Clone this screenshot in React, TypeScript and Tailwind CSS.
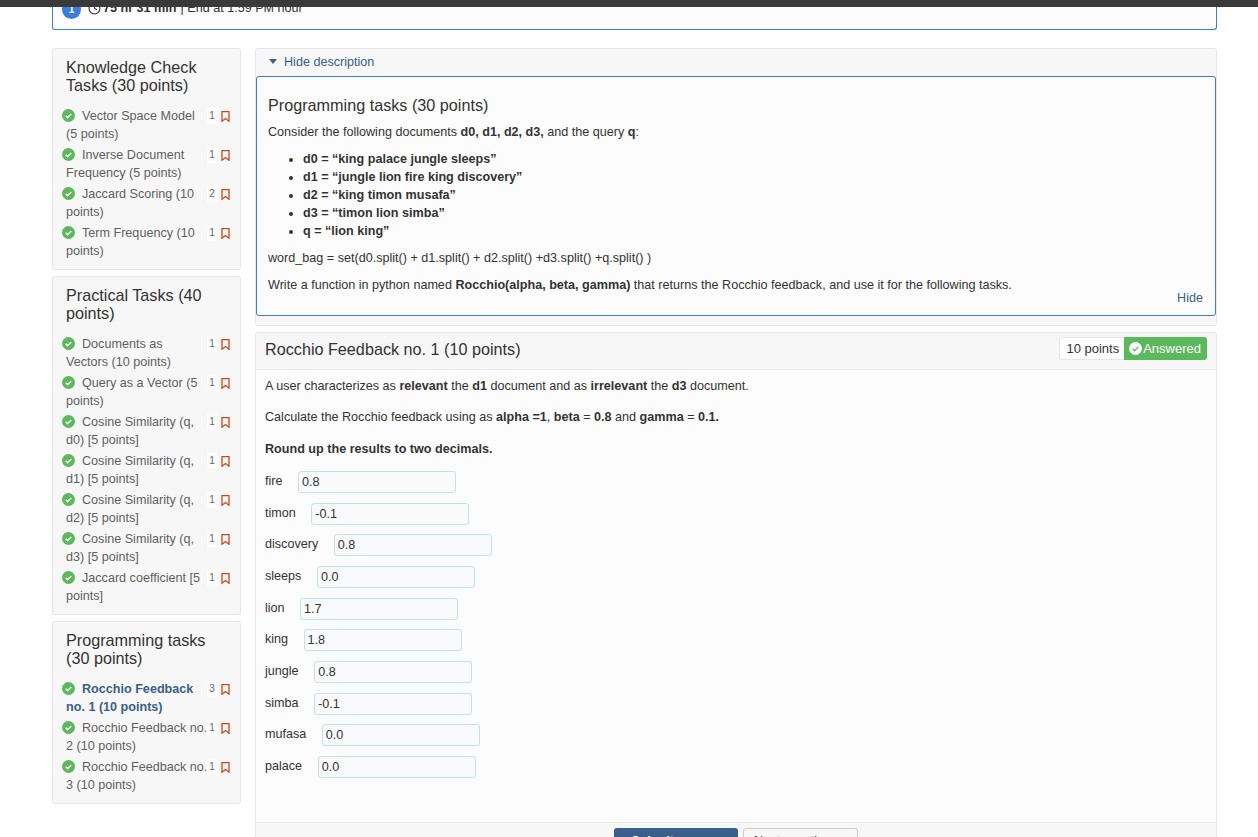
import { Clock, ChevronRight } from 'lucide-react';

type Task = { label: string; count: number; active?: boolean };

const sections: { title: string; tasks: Task[] }[] = [
  {
    title: 'Knowledge Check Tasks (30 points)',
    tasks: [
      { label: 'Vector Space Model (5 points)', count: 1 },
      { label: 'Inverse Document Frequency (5 points)', count: 1 },
      { label: 'Jaccard Scoring (10 points)', count: 2 },
      { label: 'Term Frequency (10 points)', count: 1 },
    ],
  },
  {
    title: 'Practical Tasks (40 points)',
    tasks: [
      { label: 'Documents as\nVectors (10 points)', count: 1 },
      { label: 'Query as a Vector (5 points)', count: 1 },
      { label: 'Cosine Similarity (q, d0) [5 points]', count: 1 },
      { label: 'Cosine Similarity (q, d1) [5 points]', count: 1 },
      { label: 'Cosine Similarity (q, d2) [5 points]', count: 1 },
      { label: 'Cosine Similarity (q, d3) [5 points]', count: 1 },
      { label: 'Jaccard coefficient [5 points]', count: 1 },
    ],
  },
  {
    title: 'Programming tasks (30 points)',
    tasks: [
      { label: 'Rocchio Feedback no. 1 (10 points)', count: 3, active: true },
      { label: 'Rocchio Feedback no. 2 (10 points)', count: 1 },
      { label: 'Rocchio Feedback no. 3 (10 points)', count: 1 },
    ],
  },
];

const docs = [
  'd0 = “king palace jungle sleeps”',
  'd1 = “jungle lion fire king discovery”',
  'd2 = “king timon musafa”',
  'd3 = “timon lion simba”',
  'q = “lion king”',
];

const answers = [
  ['fire', '0.8'],
  ['timon', '-0.1'],
  ['discovery', '0.8'],
  ['sleeps', '0.0'],
  ['lion', '1.7'],
  ['king', '1.8'],
  ['jungle', '0.8'],
  ['simba', '-0.1'],
  ['mufasa', '0.0'],
  ['palace', '0.0'],
];

function CheckDot({ className }: { className: string }) {
  return (
    <svg viewBox="0 0 14 14" className={className}>
      <circle cx="7" cy="7" r="7" fill="#5cb85c" />
      <path d="M4 7.3l2 2 4-4" fill="none" stroke="#fff" strokeWidth="1.6" />
    </svg>
  );
}

function TaskRow({ task }: { task: Task }) {
  return (
    <li className="relative pr-[31px] pb-[3px] pl-[13px] whitespace-pre-line">
      <CheckDot className="absolute top-[2px] left-[9px] h-[13px] w-[13px]" />
      <span className={task.active ? 'font-bold text-[#3a5f8a]' : 'text-[#5f5f5f]'}>
        <span className="inline-block w-[16px]" />
        {task.label}
      </span>
      <span className="absolute top-[1px] right-[23px] w-[10px] bg-[#fcfcfc] text-center text-[10px] leading-[16px] text-[#666]">
        {task.count}
      </span>
      <svg viewBox="0 0 9 11" className="absolute top-[4px] right-[10px] h-[11px] w-[9px]">
        <path d="M1 .7h7v9.5L4.5 7.6 1 10.2z" fill="none" stroke="#c9491c" strokeWidth="1.3" />
      </svg>
    </li>
  );
}

export default function App() {
  return (
    <div className="h-[837px] overflow-hidden bg-white font-['Liberation_Sans',Arial,sans-serif] text-[12.6px] leading-[18px] text-[#333]">
      <div className="h-[7px] bg-[#3a3a3a]" />

      <div className="pr-[41px] pl-[52px]">
        <div className="flex h-[23px] items-start gap-[7px] overflow-hidden rounded-b-[3px] border-x border-b border-[#3b7ddd] bg-[#fcfcfc] pl-[9px]">
          <span className="mt-[-7px] flex h-[19px] w-[19px] shrink-0 items-center justify-center rounded-full bg-[#3b7ddd] text-[10px] font-bold text-white">
            1
          </span>
          <span className="mt-[-7px] flex items-center gap-[2px] leading-[16px]">
            <Clock className="h-[13px] w-[13px]" />
            <b className="font-bold">75 hr 31 min</b>
            <span className="ml-[2px]">| End at 1:59 PM hour</span>
          </span>
        </div>

        <div className="mt-[18px] flex items-start gap-[14px]">
          <aside className="flex w-[189px] shrink-0 flex-col gap-[6px]">
            {sections.map((s) => (
              <section key={s.title} className="rounded-[3px] border border-[#e6e6e6] bg-[#f7f7f7] pt-[9px] pb-[6px]">
                <h3 className="px-[13px] pb-[13px] text-[16.2px] leading-[18px] font-normal text-[#333]">{s.title}</h3>
                <ul>
                  {s.tasks.map((t) => (
                    <TaskRow key={t.label} task={t} />
                  ))}
                </ul>
              </section>
            ))}
          </aside>

          <main className="min-w-0 flex-1">
            <div className="rounded-[3px] border border-[#e6e6e6] bg-[#f7f7f7] pb-[9px]">
              <div className="flex h-[27px] items-center gap-[7px] pb-[2px] pl-[13px] text-[#3a5f8a]">
                <span className="h-0 w-0 border-x-[4.5px] border-t-[5px] border-x-transparent border-t-[#3a5f8a]" />
                Hide description
              </div>
              <div className="rounded-[3px] border border-[#3b7ddd] bg-[#fcfcfc] px-[11px] pt-[19px] pb-[8px]">
                <h3 className="text-[16.2px] leading-[18px] font-normal">Programming tasks (30 points)</h3>
                <p className="mt-[9px]">
                  Consider the following documents <b>d0, d1, d2, d3,</b> and the query <b>q</b>:
                </p>
                <ul className="mt-[9px] list-disc pl-[35px] font-bold">
                  {docs.map((d) => (
                    <li key={d}>{d}</li>
                  ))}
                </ul>
                <p className="mt-[9px]">word_bag = set(d0.split() + d1.split() + d2.split() +d3.split() +q.split() )</p>
                <p className="mt-[9px]">
                  Write a function in python named <b>Rocchio(alpha, beta, gamma)</b> that returns the Rocchio feedback, and use it for the following tasks.
                </p>
                <div className="mt-[-5px] pr-[1px] text-right text-[#3a5f8a]">Hide</div>
              </div>
            </div>

            <div className="mt-[6px] rounded-t-[3px] border border-[#e6e6e6] bg-[#fcfcfc]">
              <div className="flex h-[37px] items-start justify-between border-b border-[#e6e6e6] bg-[#f7f7f7] px-[9px] pt-[4px]">
                <h3 className="pt-[3px] text-[16.2px] font-normal">Rocchio Feedback no. 1 (10 points)</h3>
                <div className="flex h-[23px] items-stretch text-[13px]">
                  <span className="flex items-center rounded-l-[3px] border border-r-0 border-[#e6e6e6] bg-white pr-[5px] pl-[6px]">10 points</span>
                  <span className="flex items-center gap-[1px] rounded-r-[3px] bg-[#5cb85c] pr-[6px] pl-[5px] text-white">
                    <svg viewBox="0 0 14 14" className="h-[13px] w-[13px]">
                      <circle cx="7" cy="7" r="7" fill="#fff" />
                      <path d="M4 7.3l2 2 4-4" fill="none" stroke="#5cb85c" strokeWidth="1.4" />
                    </svg>
                    Answered
                  </span>
                </div>
              </div>

              <div className="h-[452px] px-[9px] pt-[7px]">
                <p>
                  A user characterizes as <b>relevant</b> the <b>d1</b> document and as <b>irrelevant</b> the <b>d3</b> document.
                </p>
                <p className="mt-[13px]">
                  Calculate the Rocchio feedback using as <b>alpha =1</b>, <b>beta</b> = <b>0.8</b> and <b>gamma</b> = <b>0.1.</b>
                </p>
                <p className="mt-[14px] font-bold">Round up the results to two decimals.</p>
                <div className="mt-[13px] flex flex-col items-start gap-[9.67px]">
                  {answers.map(([name, value]) => (
                    <label key={name} className="flex items-center gap-[15.5px]">
                      <span className="mb-[2px]">{name}</span>
                      <input
                        readOnly
                        value={value}
                        className="h-[22px] w-[158px] rounded-[3px] border border-[#bce4ee] bg-[#fafafa] px-[3px] text-[12.6px] text-[#333] outline-none"
                      />
                    </label>
                  ))}
                </div>
              </div>

              <div className="flex h-[20px] justify-center gap-[5px] border-t border-[#e6e6e6] bg-[#f7f7f7] pt-[5px]">
                <button className="h-[30px] w-[124px] shrink-0 rounded-[3px] bg-[#3a5f8a] pb-[4px] font-bold text-white">Submit answer</button>
                <button className="flex h-[30px] w-[115px] shrink-0 items-start justify-center gap-[4px] rounded-[3px] border border-[#ccc] bg-[#f7f7f7] pt-[3px]">
                  Next question <ChevronRight className="mt-[3px] h-[12px] w-[12px]" />
                </button>
              </div>
            </div>
          </main>
        </div>
      </div>
    </div>
  );
}
